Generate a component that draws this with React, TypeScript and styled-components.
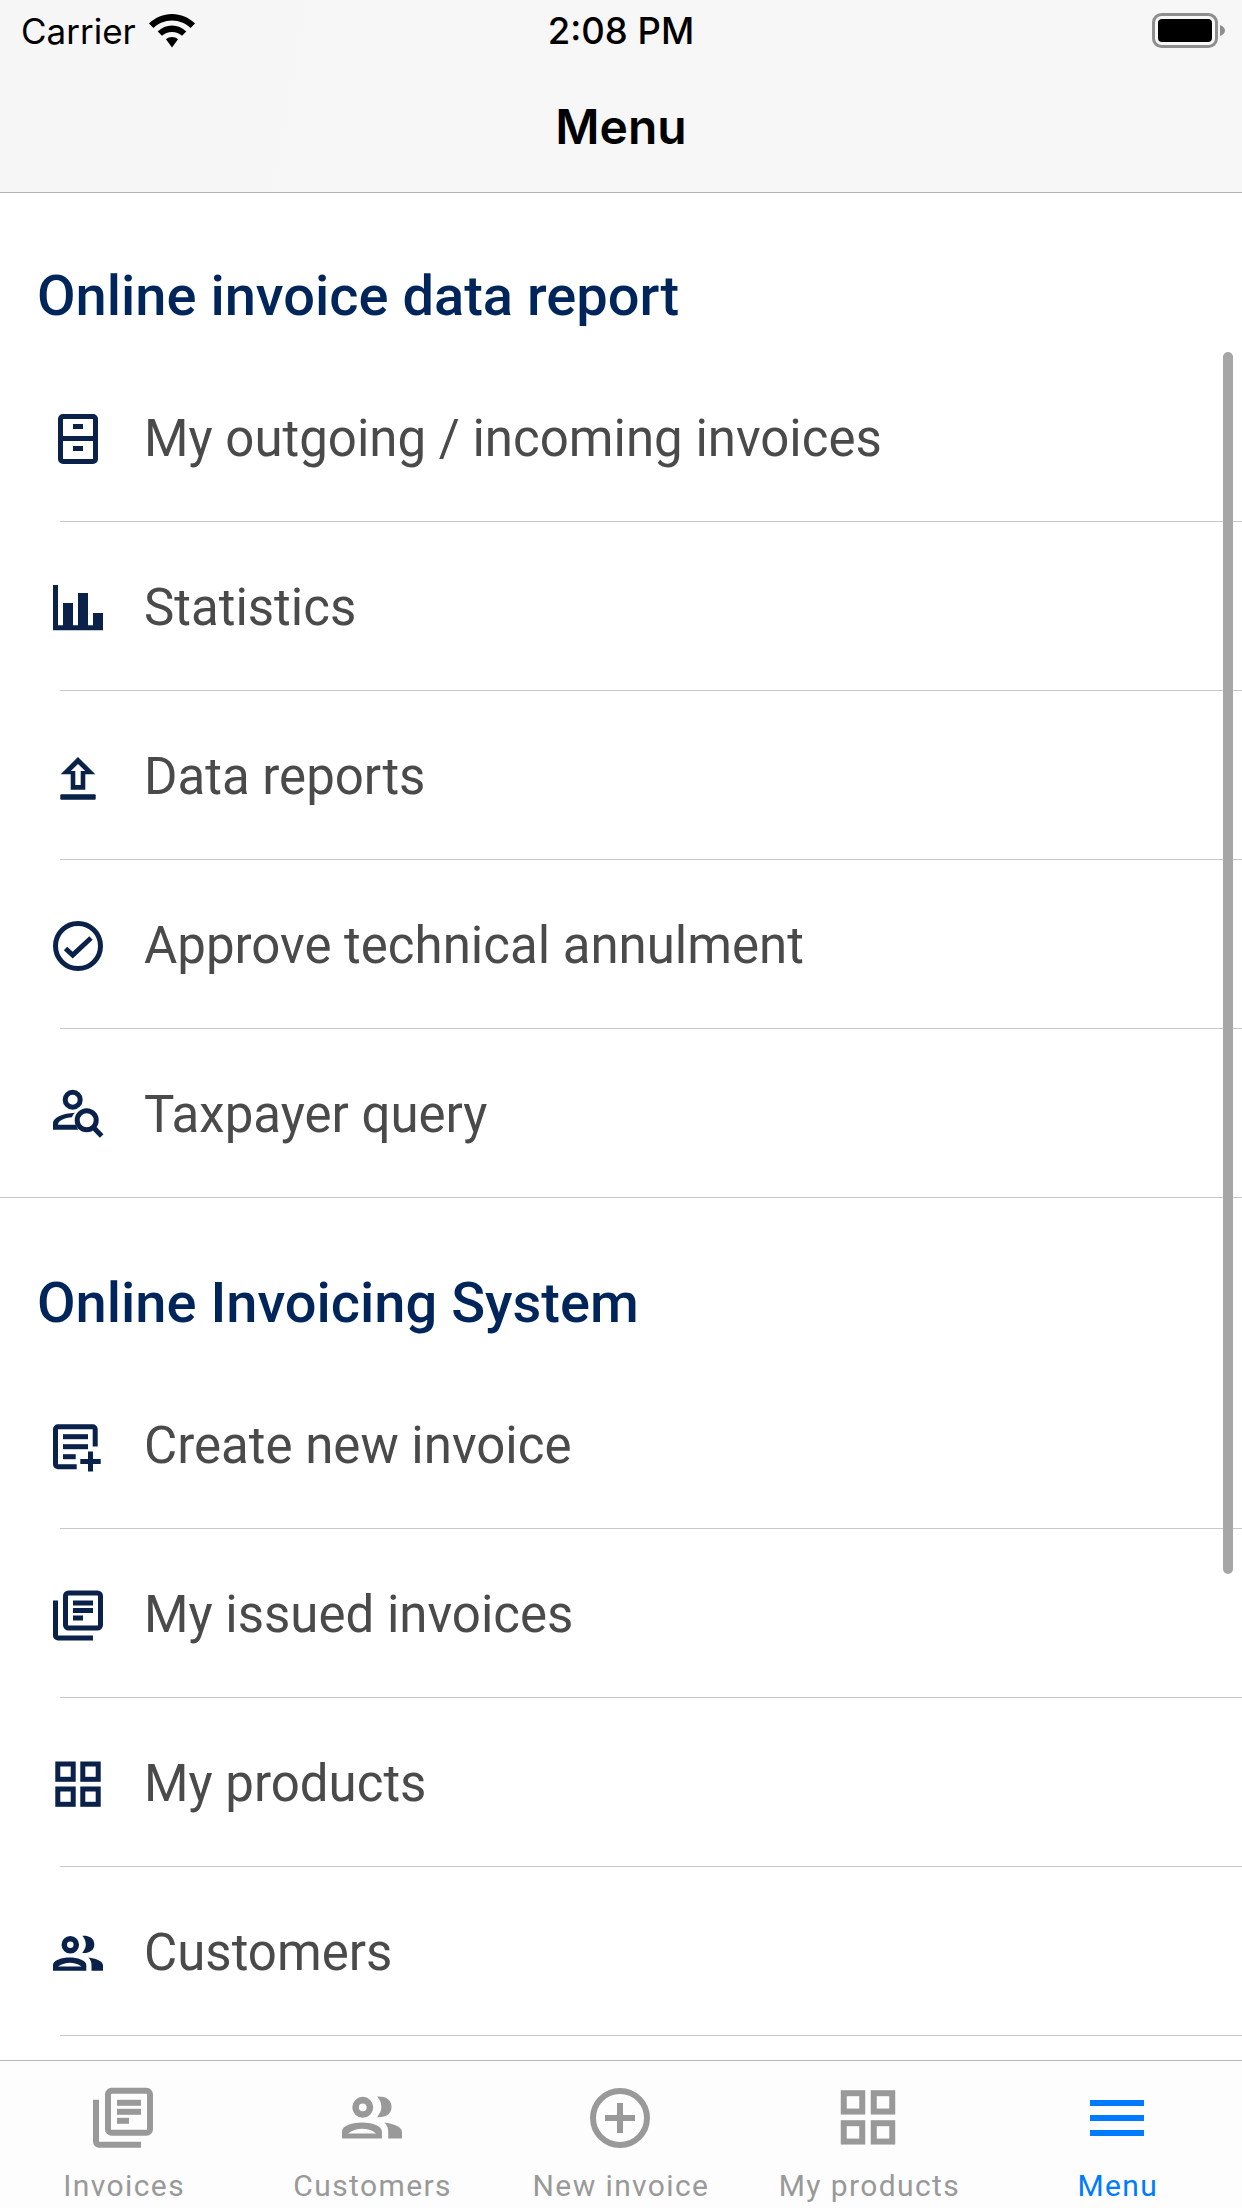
import React from "react"
import styled, { createGlobalStyle } from "styled-components"

const NAVY = "#0a2149"
const TITLE_BLUE = "#00255a"
const TAB_GREY = "#999999"
const TAB_BLUE = "#007aff"

const GlobalStyle = createGlobalStyle`
html, body {
    margin: 0;
    padding: 0;
    background: #ffffff;
}
* {
    box-sizing: border-box;
}
`

const Screen = styled.div`
width: 1242px;
height: 2208px;
display: flex;
flex-direction: column;
overflow: hidden;
background: #ffffff;
font-family: Roboto, "Liberation Sans", sans-serif;
`
const Header = styled.header`
flex: none;
height: 193px;
background: linear-gradient(100deg, #f6f6f6 0%, #f7f7f7 100%);
border-bottom: 1px solid #b2b2b2;
font-family: Inter, "Liberation Sans", sans-serif;
`
const StatusBar = styled.div`
height: 60px;
padding: 2px 21px 0 21px;
display: grid;
grid-template-columns: 1fr auto 1fr;
align-items: center;
color: #000000;
`
const Carrier = styled.div`
display: flex;
align-items: center;
gap: 13px;
font-size: 35px;
font-weight: 400;
`
const Clock = styled.div`
font-size: 36.5px;
font-weight: 500;
white-space: nowrap;
`
const BatterySlot = styled.div`
display: flex;
justify-content: flex-end;
margin-right: -5px;
`
const NavBar = styled.div`
height: 132px;
display: flex;
align-items: center;
justify-content: center;
font-size: 48px;
font-weight: 600;
color: #000000;
`
const ScrollArea = styled.main`
position: relative;
flex: 1;
overflow: hidden;
`
const ScrollThumb = styled.div`
position: absolute;
top: 159px;
right: 9px;
width: 10px;
height: 1222px;
border-radius: 5px;
background: #a6a6a6;
`
const Section = styled.section<{ $divided?: boolean; $extra?: number }>`
padding-top: ${(p) => p.$extra ?? 0}px;
border-bottom: ${(p) => (p.$divided ? "1px solid #c8c8c8" : "none")};
`
const SectionTitle = styled.h2`
margin: 0;
height: 160px;
padding: 46px 0 0 37px;
display: flex;
align-items: center;
font-size: 56px;
font-weight: 500;
color: ${TITLE_BLUE};
`
const Row = styled.div<{ $last?: boolean }>`
height: 169px;
margin-bottom: ${(p) => (p.$last ? "-1px" : "0")};
display: flex;
align-items: center;
padding-left: 48px;
gap: 36px;
font-size: 51px;
font-weight: 400;
color: #4a4a4a;
position: relative;
&::after {
    content: "";
    display: ${(p) => (p.$last ? "none" : "block")};
    position: absolute;
    left: 60px;
    right: 0;
    bottom: 0;
    height: 1px;
    background: #c8c8c8;
}
`
const RowLabel = styled.span`
margin-top: 2px;
white-space: nowrap;
`
const IconBox = styled.svg<{ $size: number }>`
flex: none;
display: block;
width: ${(p) => p.$size}px;
height: ${(p) => p.$size}px;
color: ${NAVY};
`
const TabBar = styled.nav`
flex: none;
height: 148px;
display: grid;
grid-template-columns: repeat(5, 1fr);
background: #fdfdfd;
border-top: 1px solid #b5b5b5;
`
const TabItem = styled.div<{ $active?: boolean }>`
padding-top: 19px;
display: flex;
flex-direction: column;
align-items: center;
color: ${(p) => (p.$active ? TAB_BLUE : TAB_GREY)};
font-size: 30px;
letter-spacing: 1.4px;
& svg {
    color: inherit;
    margin-right: 2px;
}
`
const TabLabel = styled.span`
margin-top: 15px;
line-height: 38px;
white-space: nowrap;
`

type GlyphProps = { size?: number }

const CabinetIcon = ({ size = 60 }: GlyphProps) => (
    <IconBox $size={size} viewBox="0 0 60 60" fill="currentColor">
        <rect x="12.5" y="8.5" width="35" height="45" rx="2.5" fill="none" stroke="currentColor" strokeWidth="5" />
        <rect x="10" y="28" width="40" height="5" />
        <rect x="25" y="16" width="10" height="5" />
        <rect x="25" y="38" width="10" height="5" />
    </IconBox>
)

const BarsIcon = ({ size = 60 }: GlyphProps) => (
    <IconBox $size={size} viewBox="0 0 60 60" fill="currentColor">
        <path d="M5 8h5v40.3h5V26h10v22.3h5V16h10v32.3h5V36h10v17.3H5z" />
    </IconBox>
)

const UploadIcon = ({ size = 60 }: GlyphProps) => (
    <IconBox $size={size} viewBox="0 0 60 60" fill="currentColor">
        <path
            fillRule="evenodd"
            d="M30 11 47.3 28.3H37.3V43.7H22.7V28.3H12.7zM30 18 22.8 25H27.3V39H32.7V25H37.2z"
        />
        <rect x="12.3" y="48.3" width="35.4" height="5.4" rx="1" />
    </IconBox>
)

const CheckIcon = ({ size = 60 }: GlyphProps) => (
    <IconBox $size={size} viewBox="0 0 60 60" fill="none" stroke="currentColor">
        <circle cx="30" cy="31" r="22.5" strokeWidth="5" />
        <path d="M17.5 33.5 24.7 40 43 23" strokeWidth="5" />
    </IconBox>
)

const PersonSearchIcon = ({ size = 60 }: GlyphProps) => (
    <IconBox $size={size} viewBox="0 0 60 60" fill="currentColor">
        <circle cx="24.7" cy="15.7" r="7.5" fill="none" stroke="currentColor" strokeWidth="5" />
        <path d="M5 45.7V39C5 33.5 15 29.3 27 28.7 25.5 30 24.5 31.5 24 33.3 16.5 34 10 36.5 10 40.7H28C28.500 42.500 29 44 30.500 45.700z" />
        <circle cx="38.7" cy="36.3" r="9.5" fill="none" stroke="currentColor" strokeWidth="5" />
        <path d="M45 43 53.700 52" fill="none" stroke="currentColor" strokeWidth="5" />
    </IconBox>
)

const NewDocIcon = ({ size = 60 }: GlyphProps) => (
    <IconBox $size={size} viewBox="0 0 60 60" fill="currentColor">
        <path
            d="M47.2 31.5V14.2a2.500 2.500 0 0 0-2.500-2.500H10a2.500 2.500 0 0 0-2.500 2.500V49.200a2.500 2.500 0 0 0 2.500 2.500H28.700"
            fill="none"
            stroke="currentColor"
            strokeWidth="5"
        />
        <rect x="15" y="19.2" width="25" height="5" />
        <rect x="15" y="29.2" width="25" height="5" />
        <rect x="15" y="39.2" width="12.700" height="5" />
        <rect x="40" y="36.500" width="5" height="20" />
        <rect x="32.300" y="44" width="20.400" height="5" />
    </IconBox>
)

const IssuedIcon = ({ size = 60 }: GlyphProps) => (
    <IconBox $size={size} viewBox="0 0 60 60" fill="currentColor">
        <rect x="17.500" y="9" width="35" height="35" rx="3" fill="none" stroke="currentColor" strokeWidth="5" />
        <path d="M7.500 16.500V51.500a2.500 2.500 0 0 0 2.500 2.500H45" fill="none" stroke="currentColor" strokeWidth="5" />
        <rect x="25" y="16.500" width="20" height="5" />
        <rect x="25" y="24" width="20" height="5" />
        <rect x="25" y="31.500" width="10" height="5" />
    </IconBox>
)

const GridIcon = ({ size = 60 }: GlyphProps) => (
    <IconBox $size={size} viewBox="0 0 60 60" fill="none" stroke="currentColor" strokeWidth="5">
        <rect x="9.800" y="11" width="15.400" height="15.300" />
        <rect x="34.800" y="11" width="15.400" height="15.300" />
        <rect x="9.800" y="36" width="15.400" height="15.300" />
        <rect x="34.800" y="36" width="15.400" height="15.300" />
    </IconBox>
)

const PeopleIcon = ({ size = 60 }: GlyphProps) => (
    <IconBox $size={size} viewBox="0 0 60 60" fill="currentColor">
        <circle cx="22.300" cy="22.800" r="6" fill="none" stroke="currentColor" strokeWidth="5.500" />
        <path d="M34.300 13.800C41 13.500 46.300 16 46.300 22.500 46.300 28.500 41 31.500 34.300 31 37 27 37.800 25 37.800 22.500 37.800 20 37 17 34.300 13.800Z" />
        <path
            fillRule="evenodd"
            d="M5 48.800V43C5 38 14 35.500 21.700 35.500 29 35.500 38.300 38 38.300 43V48.800ZM10 44.500C14 41.800 18 40.700 21.700 40.700 26 40.700 30 41.800 33.500 44.500Z"
        />
        <path d="M40.300 35.500C48 36.500 55 39 55 43.500V48.800H43.500V43C43.500 40 42.500 37.500 40.300 35.500Z" />
    </IconBox>
)

const PlusCircleIcon = ({ size = 72 }: GlyphProps) => (
    <IconBox $size={size} viewBox="0 0 72 72" fill="none" stroke="currentColor" strokeWidth="6">
        <circle cx="36" cy="38" r="27" />
        <path d="M21 38H51M36 23V53" />
    </IconBox>
)

const MenuIcon = ({ size = 72 }: GlyphProps) => (
    <IconBox $size={size} viewBox="0 0 72 72" fill="currentColor">
        <rect x="9" y="20" width="54" height="6" />
        <rect x="9" y="35" width="54" height="6" />
        <rect x="9" y="50" width="54" height="6" />
    </IconBox>
)

const WifiGlyph = () => (
    <svg width="46" height="34" viewBox="0 0 46 34" style={{ display: "block" }}>
        <path
            fill="#000000"
            d="M23 0C14 0 6.500 3.500 0 9.500L4.500 14C9.500 9.300 15.800 6.500 23 6.500S36.500 9.300 41.500 14L46 9.500C39.500 3.500 32 0 23 0ZM23 11.500C17.500 11.500 12.700 13.600 8.700 17.500L13 21.800C15.700 19.300 19 18 23 18S30.300 19.300 33 21.800L37.300 17.500C33.300 13.600 28.500 11.500 23 11.500ZM23 23C20.700 23 18.700 23.800 17 25.300L23 33.500 29 25.300C27.300 23.800 25.300 23 23 23Z"
        />
    </svg>
)

const BatteryGlyph = () => (
    <svg width="74" height="36" viewBox="0 0 74 36" style={{ display: "block" }}>
        <rect x="1.500" y="1.500" width="63" height="32" rx="8" fill="none" stroke="#8e8e8e" strokeWidth="3" />
        <rect x="6" y="6" width="54" height="23" rx="4" fill="#000000" />
        <path d="M68 12C71 13 73 15 73 17.500S71 22 68 23Z" fill="#8e8e8e" />
    </svg>
)

const firstGroup = [
    { Icon: CabinetIcon, label: "My outgoing / incoming invoices" },
    { Icon: BarsIcon, label: "Statistics" },
    { Icon: UploadIcon, label: "Data reports" },
    { Icon: CheckIcon, label: "Approve technical annulment" },
    { Icon: PersonSearchIcon, label: "Taxpayer query" },
]

const secondGroup = [
    { Icon: NewDocIcon, label: "Create new invoice" },
    { Icon: IssuedIcon, label: "My issued invoices" },
    { Icon: GridIcon, label: "My products" },
    { Icon: PeopleIcon, label: "Customers" },
]

const tabs = [
    { Icon: IssuedIcon, label: "Invoices" },
    { Icon: PeopleIcon, label: "Customers" },
    { Icon: PlusCircleIcon, label: "New invoice" },
    { Icon: GridIcon, label: "My products" },
    { Icon: MenuIcon, label: "Menu", active: true },
]

const App = () => {
    return (
        <Screen>
            <GlobalStyle />
            <Header>
                <StatusBar>
                    <Carrier>
                        Carrier
                        <WifiGlyph />
                    </Carrier>
                    <Clock>2:08 PM</Clock>
                    <BatterySlot>
                        <BatteryGlyph />
                    </BatterySlot>
                </StatusBar>
                <NavBar>Menu</NavBar>
            </Header>
            <ScrollArea>
                <Section $divided>
                    <SectionTitle>Online invoice data report</SectionTitle>
                    {firstGroup.map(({ Icon, label }, i) => (
                        <Row key={label} $last={i === firstGroup.length - 1}>
                            <Icon />
                            <RowLabel>{label}</RowLabel>
                        </Row>
                    ))}
                </Section>
                <Section $extra={2}>
                    <SectionTitle>Online Invoicing System</SectionTitle>
                    {secondGroup.map(({ Icon, label }) => (
                        <Row key={label}>
                            <Icon />
                            <RowLabel>{label}</RowLabel>
                        </Row>
                    ))}
                </Section>
                <ScrollThumb />
            </ScrollArea>
            <TabBar>
                {tabs.map(({ Icon, label, active }) => (
                    <TabItem key={label} $active={active}>
                        <Icon size={72} />
                        <TabLabel>{label}</TabLabel>
                    </TabItem>
                ))}
            </TabBar>
        </Screen>
    )
}

export default App
